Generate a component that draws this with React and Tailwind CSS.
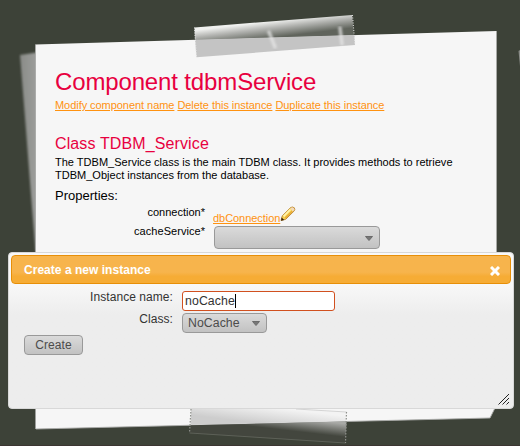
function Backdrop() {
  return (
    <svg className="absolute inset-0" width="520" height="446" viewBox="0 0 520 446">
      <defs>
        <linearGradient id="sheet" x1="0" y1="0" x2="1" y2="0">
          <stop offset="0" stopColor="#8a8c88" />
          <stop offset="1" stopColor="#a0a19f" />
        </linearGradient>
        <linearGradient id="tape" gradientUnits="userSpaceOnUse" x1="272" y1="21" x2="274" y2="37.500">
          <stop offset="0" stopColor="#f0f1ef" />
          <stop offset="0.4" stopColor="#b5b6b3" />
          <stop offset="1" stopColor="#60645c" />
        </linearGradient>
        <linearGradient id="tapeLow" gradientUnits="userSpaceOnUse" x1="268" y1="407" x2="266" y2="424">
          <stop offset="0" stopColor="#f3f3f3" />
          <stop offset="1" stopColor="#cdcdcd" />
        </linearGradient>
        <linearGradient id="tapeDark" gradientUnits="userSpaceOnUse" x1="268" y1="415" x2="266.500" y2="428">
          <stop offset="0" stopColor="#a8a9a6" />
          <stop offset="1" stopColor="#43463e" />
        </linearGradient>
        <filter id="soft"><feGaussianBlur stdDeviation="0.8" /></filter>
      </defs>
      <polygon points="20,55 40,52 40,260 35.500,250 31,195 26,130" fill="url(#sheet)" filter="url(#soft)" />
      <polygon points="518.500,51 520,50 520,66" fill="#8a8c88" />
      <polygon points="35.500,44.500 496.500,31 496.500,405 490,418 36,429" fill="#f6f6f6" />
      <path d="M35.500 44.500V429M496.500 31V405L490 418L36 429" fill="none" stroke="#a9aaa8" strokeWidth="0.9" />
      <polygon points="194.500,27.500 352,15 354,35 195,40" fill="url(#tape)" />
      <polygon points="195,39.800 354.500,35 355,45 196.500,57.300" fill="#c4c4c4" />
      <path d="M194.500 27.500L196.500 57M352.500 15L355 45" stroke="#e8e8e8" strokeWidth="1" strokeDasharray="1 1.500" />
      <g stroke="#e8e8e8" opacity="0.7" filter="url(#soft)" strokeLinecap="round">
        <path d="M269 32L275 47" strokeWidth="3.500" />
        <path d="M340 28L342 44" strokeWidth="3.500" />
      </g>
      <polygon points="191,409 296,409 346.500,412 346,421 190.500,425" fill="url(#tapeLow)" />
      <polygon points="190.500,425.200 346.500,421.500 345.500,443 189.500,433" fill="url(#tapeDark)" />
      <path d="M189.500 433L345.500 443" stroke="#656860" strokeWidth="0.8" />
      <path d="M296 409L346.500 412" stroke="#d0d0d0" strokeWidth="0.9" />
      <path d="M191 409L189.500 433M346.500 412L345.500 443" stroke="#8e908b" strokeWidth="1.200" strokeDasharray="1.500 1.500" />
      <rect y="445" width="520" height="1" fill="#3c3532" />
    </svg>
  );
}

function Pencil() {
  return (
    <svg className="mt-px" width="16" height="16" viewBox="0 0 16 16">
      <path d="M1 14.500L2.300 9.800L10.600 1.600Q12.300 .300 14.300 1.800Q15.500 3.400 14 5.100L5.700 13.300Z" fill="#f5d050" stroke="#b98230" strokeWidth="0.9" />
      <path d="M3.600 10.300L10.500 3.300" stroke="#fff4ac" strokeWidth="1.800" />
      <path d="M5.300 12L12.300 5" stroke="#eaaa35" strokeWidth="1.200" />
      <path d="M10.300 2.600L11.500 1.600Q13 1 14 2.200T13.700 4.600L12.800 5.500Z" fill="#f3d9bd" />
      <path d="M1 14.700L1.700 11.500L4.200 13.900Z" fill="#33220f" />
    </svg>
  );
}

function Arrow() {
  return (
    <svg width="8" height="5" viewBox="0 0 8 5">
      <path d="M.500 .500H7.500L4 4.500Z" fill="#777" stroke="#6b6b6b" />
    </svg>
  );
}

const buttonLook =
  "rounded border border-[#999] bg-linear-to-b from-[#dadada] to-[#c2c2c2] text-[#4c4c4c]";
const link = "text-[#ff9210] underline tracking-[-0.05px]";

export default function App() {
  return (
    <div className="relative h-[446px] w-[520px] overflow-hidden bg-[#3d4238] font-['Liberation_Sans',Arial,sans-serif] text-[11px] leading-[14px] text-black">
      <Backdrop />
      <main className="relative flex flex-col pl-[55px] pt-[68px]">
        <h1 className="text-2xl leading-7 tracking-[-0.14px] text-[#e8003f]">Component tdbmService</h1>
        <nav className="mt-0.5 flex gap-[3px]">
          <a className={link}>Modify component name</a>
          <a className={link}>Delete this instance</a>
          <a className={link}>Duplicate this instance</a>
        </nav>
        <h2 className="mt-[22px] text-base leading-5 tracking-[0.12px] text-[#e8003f]">Class TDBM_Service</h2>
        <p className="mt-0.5 w-[410px] leading-[13px] tracking-[0.015px]">
          The TDBM_Service class is the main TDBM class. It provides methods to retrieve TDBM_Object instances from the database.
        </p>
        <h3 className="mt-1.5 text-[13px] leading-4">Properties:</h3>
        <div className="mt-px flex h-[19px]">
          <span className="w-[150px] text-right">connection*</span>
          <div className="ml-2 flex items-start">
            <a className={`mt-1.5 ${link}`}>dbConnection</a>
            <Pencil />
          </div>
        </div>
        <div className="flex">
          <span className="w-[150px] text-right tracking-[0.05px]">cacheService*</span>
          <div className={`ml-[9px] mt-0.5 flex h-[23px] w-[166px] items-center justify-end pr-1.5 pt-0.5 ${buttonLook}`}>
            <Arrow />
          </div>
        </div>
      </main>

      <section className="absolute left-2 top-[252px] flex h-[157px] w-[506px] flex-col rounded border border-[#d8d8d8] bg-[#ededed] bg-linear-to-b from-[#f8f8f8] from-20% to-[#ededed] to-40% p-0.5 text-xs text-[#333]">
        <header className="flex h-[29px] items-center justify-between rounded border border-[#e78f08] bg-linear-to-b from-[#f7b44c] from-60% to-[#f6ac35] to-75% pl-3 pr-2.5 font-bold tracking-[0.03px] text-white">
          <span>Create a new instance</span>
          <svg className="mt-0.5" width="10" height="10" viewBox="0 0 10 10">
            <path d="M1 1L9 9M9 1L1 9" stroke="white" strokeWidth="3" />
          </svg>
        </header>
        <div className="mt-[7px] flex h-[22px]">
          <label className="-mt-0.5 w-[162px] text-right tracking-[0.06px]">Instance name:</label>
          <div className="ml-[9px] flex h-5 w-[153px] items-center rounded-[3px] border border-[#d1501f] bg-white pl-0.5 text-[#333]">
            <span className="text-[12.300px] tracking-[0.1px]">noCache</span>
            <span className="h-3.5 w-px bg-black" />
          </div>
        </div>
        <div className="flex h-[22px]">
          <label className="-mt-0.5 w-[162px] text-right tracking-[0.06px]">Class:</label>
          <div className={`ml-[9px] flex h-5 w-[85px] items-center justify-between pl-[5px] pr-1.5 ${buttonLook}`}>
            <span className="text-[12.300px] tracking-[0.05px]">NoCache</span>
            <Arrow />
          </div>
        </div>
        <button className={`ml-[13px] h-5 w-[59px] tracking-[0.1px] ${buttonLook}`}>Create</button>
        <svg className="ml-auto mt-auto" width="14" height="14" viewBox="0 0 14 14">
          <path d="M1.500 12.500L12 2M5.500 12.500L12 6M9.500 12.500L12 10" stroke="#222" fill="none" />
        </svg>
      </section>
    </div>
  );
}
